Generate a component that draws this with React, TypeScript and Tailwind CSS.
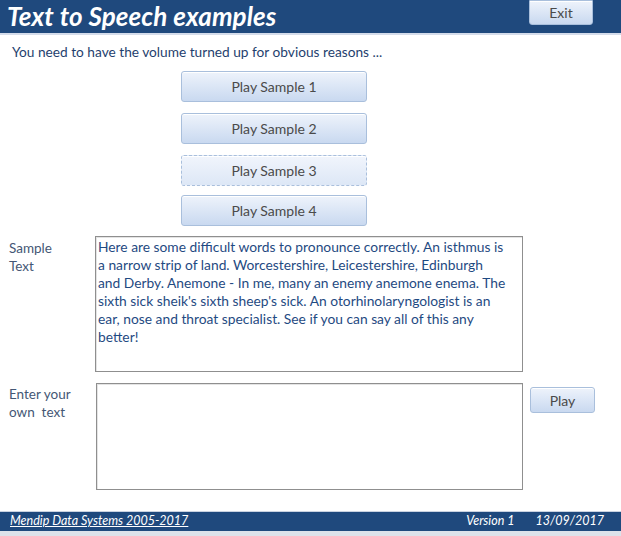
import React from 'react';

const font = { fontFamily: 'Lato, "Open Sans", sans-serif' };

const SAMPLE_LINES = [
  'Here are some difficult words to pronounce correctly. An isthmus is',
  'a narrow strip of land. Worcestershire, Leicestershire, Edinburgh',
  'and Derby. Anemone - In me, many an enemy anemone enema. The',
  "sixth sick sheik's sixth sheep's sick. An otorhinolaryngologist is an",
  'ear, nose and throat specialist. See if you can say all of this any',
  'better!',
];

const btn =
  'flex items-center justify-center rounded-[3px] border border-[#a9bfdc] bg-gradient-to-b from-[#eef3fb] to-[#c9d9f0] text-[#4a4a4a] text-[14px] shadow-[inset_0_1px_0_#ffffff]';

const App: React.FC = () => {
  return (
    <div className="w-[621px] h-[536px] bg-white flex flex-col overflow-hidden" style={font}>
      {/* Header */}
      <div className="h-[33px] bg-[#1f497d] flex items-start justify-between shrink-0">
        <h1 className="pl-[7px] pt-[1px] text-white text-[26px] font-bold italic leading-[30px] tracking-[0.1px]">
          Text to Speech examples
        </h1>
        <button className={`${btn} w-[64px] h-[25px] mr-[28px] rounded-t-none text-[13px]`}>Exit</button>
      </div>
      <div className="h-[2px] bg-[#d4dcea] shrink-0" />

      <p className="mt-[8px] ml-[12px] text-[13.7px] text-[#1f3f6e] leading-[18px]">
        You need to have the volume turned up for obvious reasons ...
      </p>

      {/* Sample buttons */}
      <div className="ml-[181px] mt-[10px] flex flex-col gap-[11px]">
        <button className={`${btn} w-[186px] h-[31px]`}>Play Sample 1</button>
        <button className={`${btn} w-[186px] h-[31px]`}>Play Sample 2</button>
        <button className={`${btn} w-[186px] h-[31px] border-dashed border-[#6b7b93] from-[#f1f5fc] to-[#dde7f6]`}>
          Play Sample 3
        </button>
        <button className={`${btn} w-[186px] h-[31px] -mt-[2px]`}>Play Sample 4</button>
      </div>

      {/* Sample text */}
      <div className="mt-[10px] flex">
        <div className="w-[95px] pl-[9px] pt-[3px] text-[13.5px] leading-[18px] text-[#445775]">
          Sample
          <br />
          Text
        </div>
        <div className="w-[428px] h-[136px] border border-[#8f8f8f] shadow-[inset_1px_1px_0_#e4e4e4] px-[2px] pt-[1px] text-[13.8px] leading-[18px] text-[#1f4a82] whitespace-nowrap overflow-hidden">
          {SAMPLE_LINES.map((line, i) => (
            <div key={i}>{line}</div>
          ))}
        </div>
      </div>

      {/* Own text */}
      <div className="mt-[11px] flex items-start">
        <div className="w-[96px] pl-[9px] pt-[2px] text-[13.5px] leading-[18px] text-[#445775]">
          Enter your
          <br />
          own&nbsp; text
        </div>
        <div className="w-[427px] h-[107px] border border-[#8f8f8f] shadow-[inset_1px_1px_0_#e4e4e4]" />
        <button className={`${btn} ml-[7px] mt-[4px] w-[65px] h-[26px]`}>Play</button>
      </div>

      {/* Footer */}
      <div className="mt-auto shrink-0">
        <div className="h-[1px] bg-[#c9d2e0]" />
        <div className="h-[19px] bg-[#1f497d] flex items-center text-white text-[12.5px] italic">
          <span className="ml-[10px] underline">Mendip Data Systems 2005-2017</span>
          <span className="ml-auto">Version 1</span>
          <span className="ml-[21px] mr-[17px]">13/09/2017</span>
        </div>
        <div className="h-[5px] bg-[#dde2ea]" />
      </div>
    </div>
  );
};

export default App;
